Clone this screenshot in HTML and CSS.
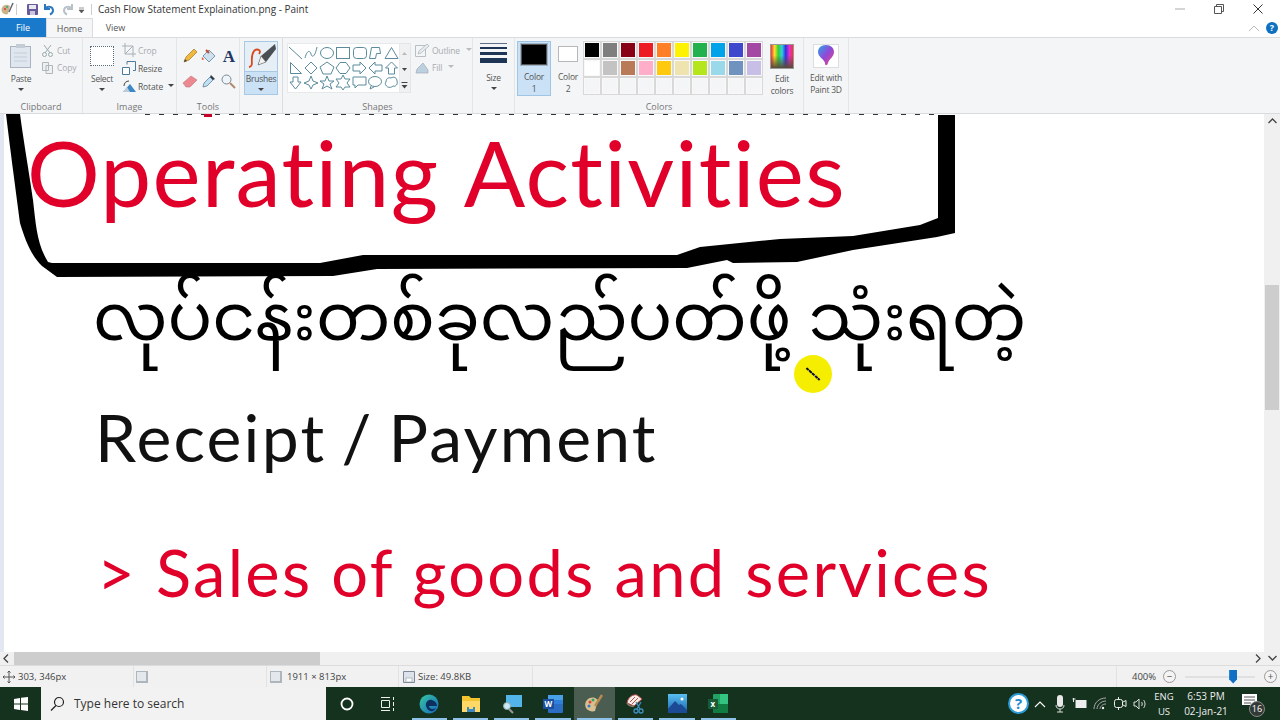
FILE: index.html
```html
<!DOCTYPE html>
<html lang="en">
<head>
<meta charset="utf-8">
<title>Cash Flow Statement Explaination.png - Paint</title>
<link rel="stylesheet" href="styles.css">
</head>
<body>
<div class="app">
  <header class="titlebar">
    <svg class="qat" width="92" height="18" viewBox="0 0 92 18">
      <path d="M2 12c-2-4 2-8 6-7l2 1-2 8c-2 1-5 0-6-2z" fill="#c9b48a"/><circle cx="5" cy="9" r="1" fill="#d33"/><circle cx="7" cy="7" r="1" fill="#3a7"/><path d="M13 3l-4 9" stroke="#667" stroke-width="1.5"/>
      <path d="M16.500 4v11" stroke="#ccc"/>
      <rect x="27" y="4" width="11" height="11" rx="1" fill="#6a5a9c"/><rect x="29" y="5" width="7" height="4" fill="#e8e8f0"/><rect x="30" y="11" width="5" height="4" fill="#c8c8d8"/>
      <path d="M45 4v5h5M45 8.500c3-3 8-2 8 2 0 2-1 3-3 4" fill="none" stroke="#2a78c0" stroke-width="2"/>
      <path d="M72 4v5h-5M72 8.500c-3-3-8-2-8 2 0 2 1 3 3 4" fill="none" stroke="#b8c0c8" stroke-width="2"/>
      <path d="M79 8h5M79 10h5l-2.500 3z" fill="#555" stroke="#555" stroke-width=".6"/>
      <path d="M91.500 4v11" stroke="#ccc"/>
    </svg>
    <span class="doc-title">Cash Flow Statement Explaination.png - Paint</span>
    <div class="win-controls">
      <svg class="win-btn" width="10" height="10" viewBox="0 0 10 10"><path d="M0 5h10" stroke="#aaa"/></svg>
      <svg class="win-btn" width="10" height="10" viewBox="0 0 10 10"><path d="M.5 2.500h7v7h-7zM2.500 2.500v-2h7v7h-2" fill="none" stroke="#555"/></svg>
      <svg class="win-btn" width="10" height="10" viewBox="0 0 10 10"><path d="M.5.500l9 9M9.500.500l-9 9" stroke="#333"/></svg>
    </div>
  </header>

  <nav class="tabs">
    <span class="tab tab-file">File</span>
    <span class="tab tab-on">Home</span>
    <span class="tab">View</span>
    <div class="tab-end">
      <svg width="12" height="8" viewBox="0 0 12 8"><path d="M1 7l5-5 5 5" fill="none" stroke="#bbb"/></svg>
      <span class="help-dot">?</span>
    </div>
  </nav>

  <section class="ribbon">
    <div class="group g-clip">
      <div class="group-body clip-body">
        <div class="big-tool">
          <svg width="24" height="26" viewBox="0 0 24 26"><rect x="1.500" y="3.500" width="20" height="21" fill="#dfe6ee" stroke="#aab4c0"/><rect x="7" y="1" width="9" height="4" fill="#c4ccd6"/><path d="M5 10h13M5 14h13M5 18h13" stroke="#c4ccd6"/></svg>
          <span class="tool-label paste-label">Paste</span>
          <i class="caret"></i>
        </div>
        <div class="small-col">
          <span class="small-tool off"><svg width="13" height="13" viewBox="0 0 13 13"><path d="M3 1l6 8M10 1L4 9" stroke="#9aa"/><circle cx="3.500" cy="10.500" r="2" fill="none" stroke="#9aa"/><circle cx="9.500" cy="10.500" r="2" fill="none" stroke="#9aa"/></svg>Cut</span>
          <span class="small-tool off"><svg width="13" height="13" viewBox="0 0 13 13"><path d="M1.500 1.500h6v8h-6zM5 4.500h6.500v8H5z" fill="#eef0f2" stroke="#b0b6bc"/></svg>Copy</span>
        </div>
      </div>
      <span class="group-name">Clipboard</span>
    </div>

    <div class="group g-image">
      <div class="group-body image-body">
        <div class="big-tool select-tool">
          <i class="marquee"></i>
          <span class="tool-label">Select</span>
          <i class="caret"></i>
        </div>
        <div class="small-col">
          <span class="small-tool off"><svg width="14" height="14" viewBox="0 0 14 14"><path d="M3 0v11h11M0 3h11v11M11 3L3 11" fill="none" stroke="#a8b0b8"/></svg>Crop</span>
          <span class="small-tool"><svg width="14" height="14" viewBox="0 0 14 14"><path d="M.5 6.500h7v7h-7z" fill="#fff" stroke="#4a7a9c"/><path d="M5 3.500V.500h8.500v9H11" fill="none" stroke="#4a7a9c"/></svg>Resize</span>
          <span class="small-tool"><svg width="14" height="14" viewBox="0 0 14 14"><path d="M1 13L8 5l6 8z" fill="#3d87c4"/><path d="M1 13L5 8l3 5z" fill="#bcd"/><path d="M2 7c0-3 2-5 5-5" fill="none" stroke="#444"/></svg>Rotate<i class="caret inline"></i></span>
        </div>
      </div>
      <span class="group-name">Image</span>
    </div>

    <div class="group g-tools">
      <div class="group-body tools-body">
        <div class="tool-grid">
          <svg width="16" height="16" viewBox="0 0 16 16"><path d="M2 14l2-5 8-8 3 3-8 8z" fill="#f0b840" stroke="#a87820" stroke-width=".7"/><path d="M2 14l1-3 2 2z" fill="#444"/></svg>
          <svg width="16" height="16" viewBox="0 0 16 16"><path d="M2 8l6-6 6 6-6 6z" fill="#cfe0ee" stroke="#7898b0"/><path d="M1 9c-1 3 1 4 2 2z" fill="#e0603c"/><path d="M5 2l3 3" stroke="#c04a2c" stroke-width="2"/></svg>
          <span class="text-tool">A</span>
          <svg width="16" height="16" viewBox="0 0 16 16"><path d="M1 10L9 3l6 4-7 7H4z" fill="#ea8a90" stroke="#c87078" stroke-width=".6"/></svg>
          <svg width="16" height="16" viewBox="0 0 16 16"><path d="M2 14l1-4 6-6 3 3-6 6z" fill="#bfe0f2" stroke="#55708a" stroke-width=".7"/><path d="M10 2l4 4-2 1-3-3z" fill="#2a3a4a"/></svg>
          <svg width="16" height="16" viewBox="0 0 16 16"><circle cx="6.500" cy="6.500" r="4.500" fill="#eef4fa" stroke="#7a8894"/><path d="M10 10l5 5" stroke="#b08a70" stroke-width="2"/></svg>
        </div>
      </div>
      <span class="group-name">Tools</span>
    </div>

    <div class="group g-brush">
      <div class="brush-btn">
        <div class="brush-top">
          <svg width="30" height="28" viewBox="0 0 30 28"><path d="M3 24c6-1 0-9 5-16 3-3 8-1 5 3" fill="none" stroke="#d8481c" stroke-width="1.800"/><path d="M29 1L15 13l-3 9 8-3L30 6z" fill="#4a4f54"/><path d="M15 13l-3 9 8-3z" fill="#f2f2f2" stroke="#555" stroke-width=".5"/></svg>
        </div>
        <span class="tool-label">Brushes</span>
        <i class="caret"></i>
      </div>
    </div>

    <div class="group g-shapes">
      <div class="group-body shapes-body">
        <div class="gallery">
          <svg width="112" height="48" viewBox="0 0 112 48" fill="none" stroke="#5a8a9c">
            <path d="M1 3l13 12"/>
            <path d="M17 14c2-8 5-8 6-4s4 3 6-7"/>
            <ellipse cx="39" cy="9" rx="6.500" ry="5.500"/>
            <rect x="48.500" y="3.500" width="13" height="11"/>
            <rect x="65.500" y="3.500" width="13" height="11" rx="3"/>
            <path d="M81.500 14.500l2-11h8l1 6h-4l-1 5z"/>
            <path d="M97 14.500l6.500-11 6.500 11z"/>
            <g transform="translate(0 -1)">
              <path d="M2.500 19.500v11h11z"/>
              <path d="M23 19l6 6-6 6-6-6z"/>
              <path d="M39 19l7 5-3 7h-8l-3-7z"/>
              <path d="M52 19.500h6l4 5.500-4 5.500h-6l-4-5.500z"/>
              <path d="M65 22h7v-3l6 6-6 6v-3h-7z"/>
              <path d="M94 22h-7v-3l-6 6 6 6v-3h7z"/>
              <path d="M103.500 19l6 6h-3v6h-6v-6h-3z"/>
            </g>
            <g transform="translate(0 -2)">
              <path d="M5 35h5v5h3l-5.500 7L2 40h3z"/>
              <path d="M23 34l2 5 5 2-5 2-2 4-2-4-5-2 5-2z"/>
              <path d="M39 34l2 5h5l-4 3 2 5-5-3-5 3 2-5-4-3h5z"/>
              <path d="M55 33l2 4h5l-3 4 3 4h-5l-2 3-2-3h-5l3-4-3-4h5z"/>
              <path d="M65 35h13v8h-8l-3 3v-3h-2z"/>
              <ellipse cx="87" cy="39.500" rx="6.500" ry="5"/><path d="M83 44l-1 3 4-2"/>
              <path d="M98 40c0-3 2-5 5-4 3-2 6 0 6 3 1 3-1 6-4 5-2 2-6 2-7-1-1 0-1-2 0-3z"/>
            </g>
          </svg>
        </div>
        <div class="gallery-arrows">
          <svg width="9" height="48" viewBox="0 0 9 48"><path d="M2 11l2.500-3 2.500 3z" fill="#bbb"/><path d="M2 24l2.500 3 2.500-3z" fill="#444"/><path d="M1.500 38.500h6" stroke="#444"/><path d="M1.500 41l3 3.500 3-3.500z" fill="#444"/></svg>
        </div>
        <div class="small-col outline-col">
          <span class="small-tool off"><svg width="14" height="14" viewBox="0 0 14 14"><path d="M.5 2.500h10v11H.500z" fill="none" stroke="#b8bec4"/><path d="M3 11l1-3 8-7 2 2-8 7z" fill="#e8ecf0" stroke="#a8b0b8" stroke-width=".7"/></svg>Outline<i class="caret inline pale"></i></span>
          <span class="small-tool off"><svg width="14" height="14" viewBox="0 0 14 14"><path d="M1 13h12v-3l-5-7-6 6z" fill="#bcd0e0" stroke="#a0aab4" stroke-width=".7"/></svg>Fill<i class="caret inline pale"></i></span>
        </div>
      </div>
      <span class="group-name">Shapes</span>
    </div>

    <div class="group g-size">
      <div class="size-lines"><i class="l1"></i><i class="l2"></i><i class="l3"></i><i class="l4"></i></div>
      <span class="tool-label size-label">Size</span>
      <i class="caret"></i>
    </div>

    <div class="group g-colors">
      <div class="group-body colors-body">
        <div class="color-btn color-on">
          <span class="swatch big"></span>
          <span class="tool-label two">Color<br>1</span>
        </div>
        <div class="color-btn">
          <span class="swatch small"></span>
          <span class="tool-label two">Color<br>2</span>
        </div>
        <div class="palette">
          <i class="c c1"></i><i class="c c2"></i><i class="c c3"></i><i class="c c4"></i><i class="c c5"></i><i class="c c6"></i><i class="c c7"></i><i class="c c8"></i><i class="c c9"></i><i class="c c10"></i>
          <i class="c c11"></i><i class="c c12"></i><i class="c c13"></i><i class="c c14"></i><i class="c c15"></i><i class="c c16"></i><i class="c c17"></i><i class="c c18"></i><i class="c c19"></i><i class="c c20"></i>
          <i class="c"></i><i class="c"></i><i class="c"></i><i class="c"></i><i class="c"></i><i class="c"></i><i class="c"></i><i class="c"></i><i class="c"></i><i class="c"></i>
        </div>
        <div class="edit-colors">
          <i class="rainbow"></i>
          <span class="tool-label two">Edit<br>colors</span>
        </div>
      </div>
      <span class="group-name">Colors</span>
    </div>

    <div class="group g-3d">
      <div class="p3d-icon">
        <svg width="18" height="24" viewBox="0 0 18 24"><defs><linearGradient id="p3d" x1="0" y1="0" x2="1" y2="1"><stop offset="0" stop-color="#28a8e8"/><stop offset=".5" stop-color="#9048d8"/><stop offset="1" stop-color="#f04878"/></linearGradient></defs><path d="M9 1c5 0 8 3 8 7 0 5-5 7-6 11-1 3-3 3-3 0C7 15 1 13 1 8c0-4 3-7 8-7z" fill="url(#p3d)"/></svg>
      </div>
      <span class="tool-label two">Edit with<br>Paint 3D</span>
    </div>
  </section>

  <main class="workspace">
    <div class="canvas">
      <svg class="loop" width="1260" height="170" viewBox="0 0 1260 170">
        <path fill="#000" d="M2 0L16 0C20 30 27 70 29 86C32 112 33 130 44 148L48 149L316 149L359 141L673 141L696 133L776 125L849 122L916 111L934 104L934 1L951 1L951 119L933 123L849 136L793 148L729 149L723 146L683 154L373 155L329 162L53 163L38 152C26 140 21 125 16 109C13 85 8 50 2 0Z"/>
      </svg>
      <i class="edge-line"></i><i class="edge-red"></i>
      <p class="art art-title">Operating Activities</p>
      <p class="art art-my" lang="my">လုပ်ငန်းတစ်ခုလည်ပတ်ဖို့ သုံးရတဲ့</p>
      <p class="art art-receipt">Receipt / Payment</p>
      <p class="art art-sales">&gt; Sales of goods and services</p>
      <div class="pointer"><i></i></div>
    </div>
    <aside class="vscroll">
      <svg width="9" height="6" viewBox="0 0 9 6"><path d="M.5 5l4-4 4 4" fill="none" stroke="#444" stroke-width="1.300"/></svg>
      <i class="vtrack"><b></b></i>
      <svg width="9" height="6" viewBox="0 0 9 6"><path d="M.5 1l4 4 4-4" fill="none" stroke="#444" stroke-width="1.300"/></svg>
    </aside>
    <div class="hscroll">
      <svg width="6" height="9" viewBox="0 0 6 9"><path d="M5 .5l-4 4 4 4" fill="none" stroke="#444" stroke-width="1.300"/></svg>
      <i class="htrack"><b></b></i>
      <svg width="6" height="9" viewBox="0 0 6 9"><path d="M1 .5l4 4-4 4" fill="none" stroke="#444" stroke-width="1.300"/></svg>
    </div>
  </main>

  <footer class="status">
    <div class="st st-pos"><svg width="12" height="12" viewBox="0 0 12 12"><path d="M6 0v12M0 6h12M4.500 1.500L6 0l1.500 1.500M4.500 10.500L6 12l1.500-1.500M1.500 4.500L0 6l1.500 1.500M10.500 4.500L12 6l-1.500 1.500" fill="none" stroke="#555"/></svg><span>303, 346px</span></div>
    <div class="st st-sel"><i class="st-box"></i></div>
    <div class="st st-dim"><i class="st-box"></i><span>1911 × 813px</span></div>
    <div class="st st-size"><svg width="12" height="12" viewBox="0 0 12 12"><path d="M.5.500h11v11H.500z" fill="#dde3ea" stroke="#7d8a96"/><rect x="3" y="7" width="6" height="4" fill="#fff" stroke="#7d8a96" stroke-width=".5"/></svg><span>Size: 49.8KB</span></div>
    <div class="st st-gap"></div>
    <div class="st st-zoom">
      <span>400%</span>
      <i class="zoom-btn">−</i>
      <div class="slider"><b></b></div>
      <i class="zoom-btn">+</i>
    </div>
  </footer>

  <div class="taskbar">
    <div class="start"><svg width="14" height="14" viewBox="0 0 14 14"><path d="M0 2l6-1v5.500H0zM7 .8L14 0v6.500H7zM0 7.500h6V13l-6-1zM7 7.500h7V14l-7-1z" fill="#fff"/></svg></div>
    <div class="search"><svg width="15" height="15" viewBox="0 0 15 15"><circle cx="9" cy="6" r="4.500" fill="none" stroke="#222" stroke-width="1.200"/><path d="M6 9.500L1 14.500" stroke="#222" stroke-width="1.300"/></svg><span>Type here to search</span></div>
    <div class="apps">
      <span class="app-slot"><svg width="14" height="14" viewBox="0 0 14 14"><circle cx="7" cy="7" r="5.500" fill="none" stroke="#fff" stroke-width="1.800"/></svg></span>
      <span class="app-slot"><svg width="16" height="14" viewBox="0 0 16 14"><path d="M1 .5h9M1 13.500h9M1.500 3.500h8v7h-8zM13.500 0v3M13.500 5v4M13.500 11v3" fill="none" stroke="#eee"/></svg></span>
      <span class="app-slot run"><svg width="20" height="20" viewBox="0 0 20 20"><defs><linearGradient id="edg" x1="0" y1="0" x2="1" y2="1"><stop offset="0" stop-color="#36c8a0"/><stop offset="1" stop-color="#1668c0"/></linearGradient></defs><circle cx="10" cy="10" r="9.500" fill="url(#edg)"/><path d="M7 12c-1-4 3-7 6-6 3 1 5 3 5 6h-8c0 3 4 4 7 2-2 4-8 5-10-2z" fill="#0c3060"/></svg></span>
      <span class="app-slot run"><svg width="20" height="18" viewBox="0 0 20 18"><path d="M1 1h7l2 2h9v14H1z" fill="#f4c430"/><rect x="1" y="6" width="18" height="11" fill="#ffd865"/><rect x="6" y="12" width="8" height="5" fill="#3c8ac4"/><rect x="8" y="12" width="4" height="2" fill="#ffd865"/></svg></span>
      <span class="app-slot run"><svg width="22" height="20" viewBox="0 0 22 20"><rect x="5" y="1" width="16" height="12" fill="#52b4e8"/><circle cx="6" cy="12" r="3.500" fill="#cfe8f6" stroke="#8aa"/><path d="M8 15l4 4" stroke="#9a9a9a" stroke-width="2"/></svg></span>
      <span class="app-slot run"><svg width="20" height="20" viewBox="0 0 20 20"><rect x="5" y="1" width="15" height="18" rx="1" fill="#2b6cc4"/><rect x="5" y="1" width="15" height="5" fill="#48a0e8"/><rect x="5" y="6" width="15" height="4" fill="#2f7fdc"/><rect x="0" y="5" width="11" height="10" fill="#1a4fa0"/><text class="app-letter" x="1.500" y="13">W</text></svg></span>
      <span class="app-slot run active"><svg width="20" height="20" viewBox="0 0 20 20"><path d="M2 14C-1 8 5 2 11 4l3 2-3 11c-3 1-7 0-9-3z" fill="#d8c090"/><circle cx="6" cy="8" r="1.500" fill="#e04038"/><circle cx="9" cy="6" r="1.500" fill="#38a060"/><circle cx="5" cy="12" r="1.500" fill="#3878c8"/><path d="M18 1L11 12" stroke="#b88a50" stroke-width="2.400"/></svg></span>
      <span class="app-slot run"><svg width="20" height="20" viewBox="0 0 20 20"><path d="M1 9C2 3 7 0 11 1l5 4-8 7z" fill="#f6ece8" stroke="#b84848"/><path d="M4 8l5-5M6 10l6-6" stroke="#c05050"/><path d="M1 9c1 2 4 4 7 3" fill="none" stroke="#8a7a70" stroke-width="1.500"/><path d="M10 8l4 7M15 8l-4 7" stroke="#3c90c0" stroke-width="1.300"/><circle cx="10" cy="17" r="2" fill="none" stroke="#3c90c0" stroke-width="1.300"/><circle cx="15" cy="17" r="2" fill="none" stroke="#3c90c0" stroke-width="1.300"/></svg></span>
      <span class="app-slot run"><svg width="19" height="19" viewBox="0 0 19 19"><defs><linearGradient id="pho" x1="0" y1="0" x2="0" y2="1"><stop offset="0" stop-color="#58c0f0"/><stop offset="1" stop-color="#1c62b0"/></linearGradient></defs><rect width="19" height="19" fill="url(#pho)"/><path d="M0 15l7-8 4 4 2-1 6 6v3H0z" fill="#1c4a94"/><circle cx="14" cy="5" r="1.500" fill="#fff"/></svg></span>
      <span class="app-slot run"><svg width="20" height="19" viewBox="0 0 20 19"><rect x="5" y="0" width="15" height="19" rx="1" fill="#21a366"/><rect x="12" y="0" width="8" height="10" fill="#33c481"/><rect x="5" y="10" width="15" height="9" fill="#107c41"/><rect x="0" y="5" width="10" height="10" fill="#185c37"/><text class="app-letter" x="2.500" y="13">x</text></svg></span>
    </div>
    <div class="tray">
      <span class="tray-help">?</span>
      <svg width="12" height="8" viewBox="0 0 12 8"><path d="M1 7l5-5 5 5" fill="none" stroke="#fff" stroke-width="1.100"/></svg>
      <svg width="10" height="18" viewBox="0 0 10 18"><rect x="2" y="0" width="6" height="12" rx="3" fill="#e8e8e8"/><path d="M1 10c0 3 2 4 4 4s4-1 4-4M5 14v3M2 17h6" stroke="#ddd" fill="none"/></svg>
      <svg width="15" height="11" viewBox="0 0 15 11"><path d="M3 2h11v8H3z" fill="#eee"/><path d="M1 0v4M0 1h3" stroke="#eee"/></svg>
      <svg width="14" height="13" viewBox="0 0 14 13"><path d="M1 12C1 6 6 1 13 1M4 12c0-4 4-8 9-8M7 12c0-2 2-5 6-5" fill="none" stroke="#aaa"/><circle cx="10" cy="11" r="1.200" fill="#eee"/></svg>
      <svg width="14" height="15" viewBox="0 0 14 15"><rect x="1.500" y="3.500" width="8" height="8" rx="2" fill="none" stroke="#eee"/><path d="M5.500 1v2M5.500 12v2M10 6l3-1.500v6L10 9" fill="none" stroke="#eee"/></svg>
      <svg width="14" height="12" viewBox="0 0 14 12"><path d="M1 4h2l3-3v10L3 8H1z" fill="none" stroke="#ddd"/><path d="M8.500 4c1 1 1 3 0 4M10.500 2c2 2 2 6 0 8" fill="none" stroke="#ddd"/></svg>
      <span class="tray-lang">ENG<br>US</span>
      <span class="tray-time">6:53 PM<br>02-Jan-21</span>
      <span class="notif"><svg width="16" height="15" viewBox="0 0 16 15"><path d="M0 0h15v11H0z" fill="#fff"/><path d="M2 3h11M2 6h11M2 9h7" stroke="#555"/></svg><b>16</b></span>
    </div>
  </div>
</div>
</body>
</html>
```
FILE: styles.css
```css
* { box-sizing: border-box; }
html, body { margin: 0; padding: 0; }
body { width: 1280px; height: 720px; overflow: hidden; background: #fff; font-family: "Open Sans", "Noto Sans", sans-serif; color: #444; }
p { margin: 0; }
i { display: block; font-style: normal; }
.app { width: 1280px; height: 720px; display: flex; flex-direction: column; }

.titlebar { height: 18px; flex: none; display: flex; align-items: center; background: #fff; }
.qat { flex: none; margin-right: 6px; }
.doc-title { font-size: 10px; color: #333; white-space: nowrap; }
.win-controls { margin-left: auto; display: flex; gap: 29px; padding-right: 17px; }

.tabs { height: 20px; flex: none; display: flex; align-items: stretch; background: #fff; font-size: 9px; border-bottom: 1px solid #dcdcdc; }
.tab { width: 45px; text-align: center; line-height: 20px; color: #555; }
.tab-file { width: 46px; background: #1979ca; color: #fff; }
.tab-on { width: 47px; background: #f5f6f7; border: 1px solid #dcdcdc; border-bottom: 0; }
.tab-end { margin-left: auto; display: flex; align-items: center; gap: 6px; padding-right: 2px; }
.help-dot { width: 12px; height: 12px; border-radius: 50%; background: #0f6fc0; color: #fff; font-size: 9px; font-weight: 700; line-height: 12px; text-align: center; }

.ribbon { height: 76px; flex: none; display: flex; background: #f4f5f7; border-bottom: 1px solid #dadbdc; }
.group { flex: none; display: flex; flex-direction: column; border-right: 1px solid #e4e5e7; }
.group-body { display: flex; height: 60px; }
.group-name { font-size: 9px; text-align: center; color: #777; line-height: 12px; margin-top: auto; }
.tool-label { font-size: 8.500px; letter-spacing: -.25px; color: #555; line-height: 12px; text-align: center; display: block; white-space: nowrap; }
.caret { width: 0; height: 0; border: 3px solid transparent; border-top: 3px solid #444; border-bottom: 0; margin: 3px auto 0; }
.caret.inline { display: inline-block; margin: 0 0 2px 3px; vertical-align: middle; }
.caret.pale { border-top-color: #bbb; }
.g-clip { width: 83px; }
.clip-body { padding: 5px 0 0 7px; }
.big-tool { width: 28px; display: flex; flex-direction: column; align-items: center; }
.paste-label { margin-top: 4px; }
.small-col { display: flex; flex-direction: column; gap: 2px; }
.small-tool { height: 16px; display: flex; align-items: center; gap: 3px; font-size: 8.500px; letter-spacing: -.15px; color: #555; white-space: nowrap; }
.small-tool.off { color: #a8acb0; }
.clip-body .small-col { margin-left: 6px; margin-top: -1px; gap: 1px; }
.g-image { width: 94px; }
.image-body { padding: 3px 0 0 7px; }
.select-tool { width: 24px; }
.marquee { width: 24px; height: 20px; margin: 5px 0 7px; border: 1px dotted #5a6a78; background: #fff; }
.image-body .small-col { margin-left: 8px; margin-top: 1px; gap: 2px; }
.image-body .small-tool { gap: 2px; }
.g-tools { width: 63px; }
.tools-body { padding: 10px 0 0 5px; }
.tool-grid { display: grid; grid-template-columns: repeat(3, 18px); gap: 1px; grid-auto-rows: 24px; }
.text-tool { font-family: "Liberation Serif", serif; font-weight: 700; font-size: 17px; line-height: 18px; color: #1f3864; text-align: center; height: 18px; }
.g-brush { width: 43px; padding: 3px 0 0 4px; border-right: 1px solid #dcdde0; }
.brush-btn { width: 34px; height: 54px; border: 1px solid #a8c8e4; background: #cbe1f6; display: flex; flex-direction: column; align-items: stretch; }
.brush-top { height: 30px; background: #e6eef6; border-bottom: 1px solid #a8c8e4; display: flex; justify-content: center; align-items: center; }
.brush-btn .tool-label { margin-top: 1px; }
.g-shapes { width: 190px; }
.shapes-body { padding: 5px 0 0 4px; }
.gallery { width: 114px; height: 50px; background: #fff; border: 1px solid #e8e9ea; overflow: hidden; }
.gallery-arrows { width: 11px; height: 50px; background: #f0f1f2; border: 1px solid #e4e5e6; border-left: 0; }
.outline-col { margin-left: 4px; gap: 1px; margin-top: -1px; }
.g-size { width: 42px; align-items: center; padding-top: 5px; }
.size-lines { width: 27px; display: flex; flex-direction: column; gap: 3px; }
.size-lines i { background: #1f3556; }
.l1 { height: 1px; opacity: .7; }
.l2 { height: 2px; }
.l3 { height: 3px; }
.l4 { height: 5px; }
.size-label { margin-top: 9px; }
.g-colors { width: 289px; }
.colors-body { padding: 3px 0 0 2px; }
.color-btn { width: 34px; height: 55px; display: flex; flex-direction: column; align-items: center; border: 1px solid transparent; }
.color-on { background: #cbe1f6; border-color: #a0c4e4; margin-right: 5px; }
.swatch { display: block; background: #fff; }
.swatch.big { width: 26px; height: 26px; margin: 2px 0 6px; background: #000; border: 1px solid #555; outline: 1px solid #9eb4c8; }
.swatch.small { width: 20px; height: 21px; margin: 4px 0 9px; border: 1px solid #b8b8b8; }
.color-btn:nth-child(2) { width: 26px; margin-right: 2px; margin-left: -1px; }
.two { line-height: 12px; }
.palette { width: 180px; height: 54px; display: grid; grid-template-columns: repeat(10, 18px); grid-auto-rows: 18px; }
.c { background: #f4f5f7; border: 1px solid #d8d8d8; box-shadow: inset 0 0 0 1px #f8f8f8; }
.c1 { background: #000; } .c2 { background: #7f7f7f; } .c3 { background: #880015; } .c4 { background: #ed1c24; } .c5 { background: #ff7f27; } .c6 { background: #fff200; } .c7 { background: #22b14c; } .c8 { background: #00a2e8; } .c9 { background: #3f48cc; } .c10 { background: #a349a4; }
.c11 { background: #fff; } .c12 { background: #c3c3c3; } .c13 { background: #b97a57; } .c14 { background: #ffaec9; } .c15 { background: #ffc90e; } .c16 { background: #efe4b0; } .c17 { background: #b5e61d; } .c18 { background: #99d9ea; } .c19 { background: #7092be; } .c20 { background: #c8bfe7; }
.edit-colors { width: 34px; margin-left: 2px; display: flex; flex-direction: column; align-items: center; }
.rainbow { width: 24px; height: 25px; margin: 3px 0 4px; border: 1px solid #999; background: linear-gradient(to bottom, transparent 0, transparent 45%, #5a4a3a 100%), linear-gradient(to right, #ff3030, #ffe030, #30d030, #30d0e0, #3030e0, #e030d0, #ff3030); }
.g-3d { width: 45px; align-items: center; padding-top: 6px; }
.p3d-icon { width: 26px; height: 24px; background: #fff; border: 1px solid #ddd; display: flex; justify-content: center; align-items: center; margin-bottom: 4px; }

.workspace { height: 551px; flex: none; display: grid; grid-template-columns: 1264px 16px; grid-template-rows: 538px 13px; background: #fff; }
.canvas { grid-column: 1; grid-row: 1; position: relative; overflow: hidden; background: #fff; border-left: 4px solid #e2e7f1; }
.loop { position: absolute; left: 0; top: 0; }
.edge-line { position: absolute; left: 141px; top: 0; width: 795px; height: 1px; background: repeating-linear-gradient(to right, #333 0 5px, transparent 5px 14px); }
.edge-red { position: absolute; left: 200px; top: 0; width: 8px; height: 3px; background: #c8002a; }
.art { position: absolute; white-space: nowrap; font-family: Lato, "Noto Sans", sans-serif; line-height: 1; }
.art-title { left: 23px; top: 12px; font-size: 91px; letter-spacing: 1.300px; word-spacing: 3px; color: #e00029; }
.art-my { left: 89px; top: 178px; font-family: "Noto Sans Myanmar", "Padauk", "Noto Sans", sans-serif; font-size: 66.200px; color: #000; }
.art-receipt { left: 91px; top: 290px; font-size: 66px; letter-spacing: 2.200px; word-spacing: -4px; color: #111; }
.art-sales { left: 93px; top: 426px; font-size: 65px; letter-spacing: 2.300px; color: #e00029; }
.pointer { position: absolute; left: 790px; top: 241px; width: 38px; height: 38px; border-radius: 50%; background: #f5ee00; display: flex; align-items: center; justify-content: center; }
.pointer i { width: 18px; height: 2px; transform: rotate(42deg); background: repeating-linear-gradient(to right, #111 0 3px, #889 3px 4px); }

.vscroll { grid-column: 2; grid-row: 1 / 3; background: #f0f0f0; display: flex; flex-direction: column; align-items: center; padding: 4px 0; }
.vtrack { flex: 1; width: 16px; padding-top: 161px; }
.vtrack b { display: block; height: 125px; background: #cdcdcd; margin: 0 1px; }
.hscroll { grid-column: 1; grid-row: 2; background: #f0f0f0; display: flex; align-items: center; padding: 0 3px; }
.htrack { flex: 1; height: 13px; padding-left: 5px; }
.htrack b { display: block; width: 306px; height: 13px; background: #cdcdcd; }

.status { height: 22px; flex: none; display: flex; background: #f1f1f1; border-top: 1px solid #dcdcdc; font-size: 9.500px; font-stretch: 88%; color: #444; }
.st { display: flex; align-items: center; gap: 5px; border-right: 1px solid #e2e2e2; height: 100%; flex: none; }
.st-pos { width: 134px; padding-left: 3px; gap: 3px; }
.st-sel { width: 133px; padding-left: 2px; }
.st-dim { width: 132px; padding-left: 3px; }
.st-size { width: 134px; padding-left: 4px; gap: 3px; }
.st-gap { width: 584px; }
.st-zoom { flex: 1; border-right: 0; padding-left: 15px; gap: 0; }
.st-box { width: 12px; height: 12px; background: #e4e8ec; border: 1px solid #aeb6bd; border-width: 1px 2px 2px 1px; }
.zoom-btn { width: 13px; height: 13px; border-radius: 50%; border: 1px solid #999; color: #555; font-size: 10px; line-height: 10px; text-align: center; background: #f4f4f4; margin-left: 7px; }
.slider { width: 70px; height: 2px; background: #e0e0e0; position: relative; margin: 0 9px; }
.slider b { position: absolute; left: 44px; top: -6px; width: 8px; height: 14px; background: #0f6fc6; clip-path: polygon(0 0, 100% 0, 100% 70%, 50% 100%, 0 70%); }
.slider + .zoom-btn { margin-left: 0; }

.taskbar { height: 33px; flex: none; display: flex; align-items: stretch; background: #15321f; color: #f0f0f0; }
.start { width: 41px; display: flex; align-items: center; justify-content: center; }
.search { width: 285px; background: #f2f2f2; display: flex; align-items: center; gap: 9px; padding-left: 9px; color: #333; font-size: 12px; }
.apps { display: flex; }
.app-slot { width: 41.300px; display: flex; align-items: center; justify-content: center; position: relative; }
.app-slot.run::after { content: ""; position: absolute; left: 3px; right: 3px; bottom: 0; height: 2px; background: #8ec2e8; }
.app-slot.active { background: #4a5d50; }
.app-letter { font-size: 8px; font-weight: 700; fill: #fff; font-family: "Open Sans", sans-serif; }
.tray { margin-left: auto; display: flex; align-items: center; padding-right: 16px; }
.tray > svg { width: 20px; }
.tray-help { width: 21px; height: 21px; border-radius: 50%; background: #fff; border: 2px solid #2a9cd8; color: #1c8cd0; font-weight: 700; font-size: 15px; line-height: 17px; text-align: center; margin-right: 1px; }
.tray-lang { font-size: 9.500px; line-height: 15px; text-align: center; color: #eee; width: 28px; }
.tray-time { font-size: 10px; line-height: 15px; text-align: center; color: #eee; width: 56px; }
.notif { position: relative; width: 22px; height: 26px; margin-left: 8px; }
.notif svg { position: absolute; left: 0; top: 3px; }
.notif b { position: absolute; left: 7px; top: 10px; width: 16px; height: 16px; border-radius: 50%; background: #333a36; border: 1px solid #888; font-size: 9px; font-weight: 400; line-height: 14px; text-align: center; color: #fff; }
```
